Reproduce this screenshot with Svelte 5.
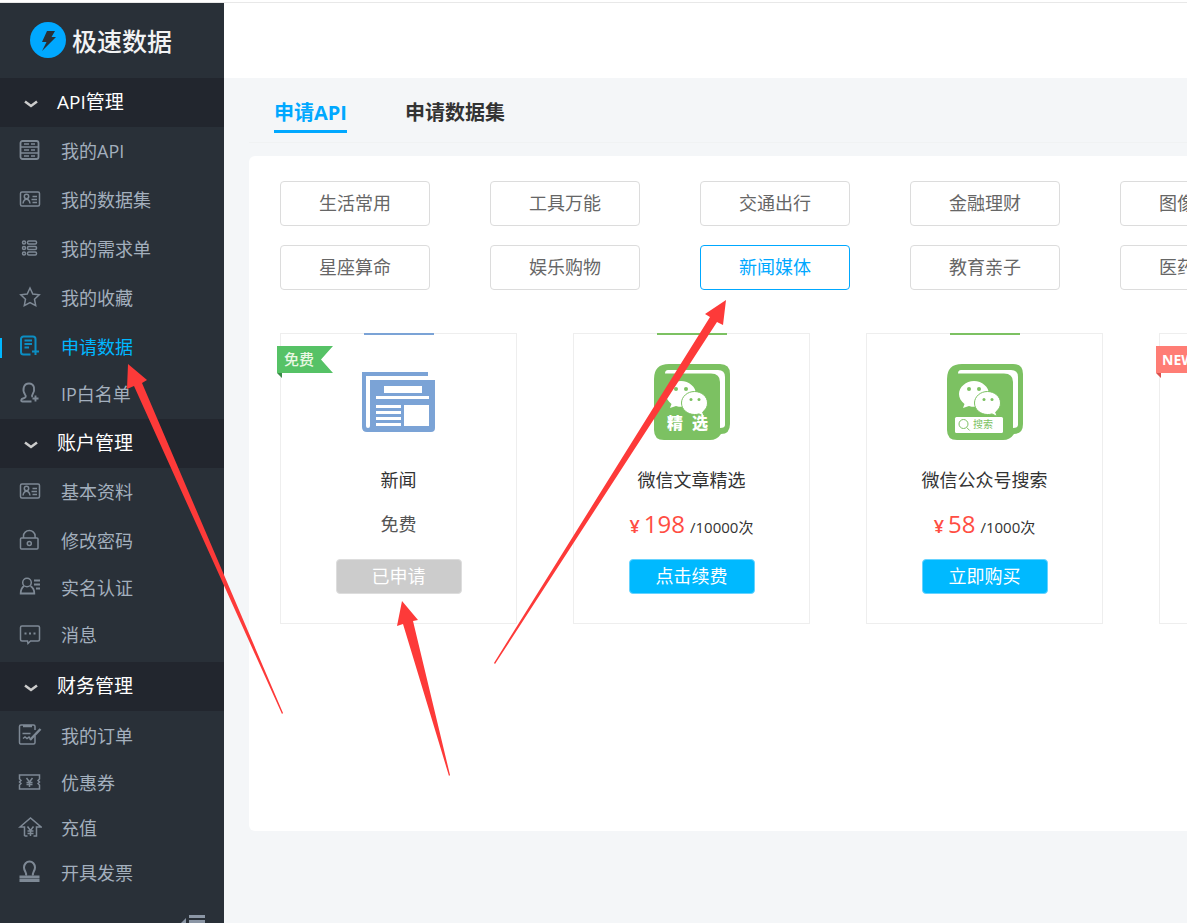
<script>
  const groups = [
    {
      title: 'API管理',
      items: [
        { icon: 'server', label: '我的API' },
        { icon: 'card', label: '我的数据集' },
        { icon: 'list', label: '我的需求单' },
        { icon: 'star', label: '我的收藏' },
        { icon: 'apply', label: '申请数据', active: true },
        { icon: 'userplus', label: 'IP白名单', compact: true }
      ]
    },
    {
      title: '账户管理',
      items: [
        { icon: 'card', label: '基本资料' },
        { icon: 'lock', label: '修改密码' },
        { icon: 'verify', label: '实名认证', compact: true },
        { icon: 'message', label: '消息' }
      ]
    },
    {
      title: '财务管理',
      spaced: true,
      items: [
        { icon: 'order', label: '我的订单' },
        { icon: 'coupon', label: '优惠券', compact: true },
        { icon: 'recharge', label: '充值', compact: true },
        { icon: 'invoice', label: '开具发票', compact: true }
      ]
    }
  ];

  const categories = [
    ['生活常用', '工具万能', '交通出行', '金融理财', '图像识别'],
    ['星座算命', '娱乐购物', '新闻媒体', '教育亲子', '医药健康']
  ];
  let current = $state('新闻媒体');

  const products = [
    { name: '新闻', icon: 'news', ribbon: '免费', free: true, action: '已申请', disabled: true },
    { name: '微信文章精选', icon: 'wechat', price: 198, unit: '/10000次', action: '点击续费' },
    { name: '微信公众号搜索', icon: 'search', price: 58, unit: '/1000次', action: '立即购买' }
  ];
</script>

{#snippet menuIcon(name)}
  <svg class="menu-icon" viewBox="0 0 24 24" width="24" height="24" aria-hidden="true">
    {#if name === 'server'}
      <rect x="2.500" y="3" width="18" height="18" rx="2" stroke-width="1.800" />
      <path d="M2.500 9h18M2.500 15h18M6 6h5M13 6h4M6 12h5M13 12h4M6 18h5M13 18h4" />
    {:else if name === 'card'}
      <rect x="2.500" y="5" width="19" height="14" rx="1.5" />
      <circle cx="8.500" cy="9.500" r="2.2" />
      <path d="M5 16.500c.5-3.300 2-4.300 3.500-4.300s3 1 3.500 4.300M14.500 9.500H19M13.500 12.500H19M14.500 15.500H19" />
    {:else if name === 'list'}
      <circle cx="6" cy="6.500" r="1.500" /><circle cx="6" cy="12" r="1.500" /><circle cx="6" cy="17.500" r="1.500" />
      <rect x="9.500" y="5" width="9" height="3" rx="1.200" /><rect x="9.500" y="10.500" width="9" height="3" rx="1.200" /><rect x="9.500" y="16" width="9" height="3" rx="1.200" />
    {:else if name === 'star'}
      <path d="M12 3l2.800 6 6.400.8-4.700 4.400 1.200 6.400L12 17.500l-5.700 3.100 1.200-6.400-4.700-4.400 6.400-.8z" />
    {:else if name === 'apply'}
      <path d="M12.500 20.500H5.500A2.500 2.500 0 0 1 3 18V5A2.500 2.500 0 0 1 5.500 2.500H15A2.500 2.500 0 0 1 17.500 5v9M6.500 6.500h7.500M6.500 10h7.500M6.500 13.500h4.500M17.500 14v7M14 17.500h7" stroke-width="2" />
    {:else if name === 'userplus'}
      <path d="M13.500 20.500H4.500c-2 0-1.500-2.500.5-3 3-.8 3.500-2 2-4C4 9 5.500 2.500 11 2.500S17.500 9 14.500 13.500c-.8 1.200-.7 2 0 2.600M17.500 14.500v6M14.500 17.500h6" stroke-width="1.900" />
    {:else if name === 'lock'}
      <rect x="2.500" y="10" width="17.500" height="11" rx="1" />
      <path d="M5.500 10V8a5.800 5.500 0 0 1 11.600 0v2" />
      <circle cx="11.300" cy="15.500" r="2" />
    {:else if name === 'verify'}
      <circle cx="9" cy="7.500" r="4.300" />
      <path d="M6 11c-2 1.500-3.300 4-3.300 7.500h13.600c0-3.500-1.300-6-3.800-7.500M16 5.500h6M16 9.500h6M18 13.500h4" stroke-width="1.800" />
    {:else if name === 'message'}
      <path d="M4 4h16a1.500 1.500 0 0 1 1.500 1.500v12a1.500 1.500 0 0 1-1.500 1.500H12.500l-2.500 2.500L9.500 19H4a1.500 1.500 0 0 1-1.500-1.500v-12A1.500 1.500 0 0 1 4 4z" />
      <path d="M6.500 11.500h2M11 11.500h2M15.500 11.500h2" stroke-width="2" />
    {:else if name === 'order'}
      <path d="M17 13v6.500a1.500 1.500 0 0 1-1.500 1.500h-13A1.500 1.500 0 0 1 1.500 19.500V3.500A1.500 1.500 0 0 1 3 2h12.500A1.500 1.500 0 0 1 17 3.500V7M5 3.500h9M5 15.500l2-1.500 2 1.500 2-1.500 1 1.500M4.500 10.500h8" />
      <path d="M22.500 6L12 17" stroke-width="2.500" />
    {:else if name === 'coupon'}
      <path d="M1.500 5h20v4l-1.500 1.500 1.500 1.500-1.500 1.500 1.500 1.500V19h-20v-4L3 13.500 1.500 12 3 10.500 1.500 9zM8.500 8l3 4 3-4M11.500 12v5M8.500 12.500h6M8.500 14.500h6" />
    {:else if name === 'recharge'}
      <path d="M6.500 21V12H2L12.500 3 23 12h-4.500v9h-3M6.500 21h3M9.500 11.500l3 4 3-4M12.500 15.500V21M9.500 16h6M9.500 18.500h6" />
    {:else if name === 'invoice'}
      <path d="M8.500 16.500c1-3-2-4.300-2-8a5 5.500 0 0 1 11 0c0 3.700-3 5-2 8" transform="translate(-.5 -1)" stroke-width="2" />
      <path d="M1.500 17h20M1.500 20.500h20" stroke-width="3" />
    {/if}
  </svg>
{/snippet}

{#snippet productIcon(name)}
  {#if name === 'news'}
    <svg viewBox="0 0 73 60" width="73" height="60" aria-hidden="true">
      <path fill="#7ba3d6" d="M0 0h66v4H4v50q0 2 2 2t2-2V8h65v48q0 4-4 4H5q-5 0-5-5z" />
      <path fill="#fff" d="M22 14h38v7H22zM14 24h53v3H14zM14 33h25v3H14zM14 39h25v3H14zM14 45h25v3H14zM14 51h25v3H14zM42 33h25v21H42z" />
    </svg>
  {:else}
    <svg viewBox="0 0 76 76" width="76" height="76" aria-hidden="true">
      <path fill="#7cc162" d="M15 0h51q10 0 10 10v50q0 10-9 10Q63 76 56 76H10Q0 76 0 66V15Q0 0 15 0z" />
      <path fill="#fff" d="M11 9.500q0-3.500 3-3.500h50q7 0 7 7v48q0 3-5 3V18q0-8.500-9-8.500z" />
      <path fill="#fff" d="M27 17c-8 0-15 6-15 13 0 4 2 7 5.500 10L16 44l6-2c9 3 20-2 20-12 0-7-7-13-15-13z" />
      <path fill="#fff" stroke="#7cc162" d="M40.500 27.500c-7 0-13 5-13 11.500s6 11.500 13 11.500c1.500 0 3 0 4.500-.6l5 2.600-1.300-4.500C52 45.500 53.500 42.500 53.500 39c0-6.500-6-11.500-13-11.500z" />
      <g fill="#7cc162">
        <circle cx="22" cy="25" r="2" /><circle cx="32" cy="25" r="2" />
        <circle cx="37" cy="35.500" r="1.500" /><circle cx="45" cy="35.500" r="1.500" />
      </g>
      {#if name === 'wechat'}
        <text class="badge-text" x="21" y="65" text-anchor="middle">精</text>
        <text class="badge-text" x="46" y="65" text-anchor="middle">选</text>
      {:else}
        <rect x="8" y="53" width="48" height="16" rx="1.500" fill="#fff" />
        <circle cx="16.500" cy="60" r="4.500" fill="none" stroke="#7cc162" />
        <path stroke="#7cc162" d="M19.700 63.500l3 3" />
        <text class="find-text" x="36" y="64" text-anchor="middle">搜索</text>
      {/if}
    </svg>
  {/if}
{/snippet}

{#snippet ribbon(text, kind)}
  <span class="ribbon {kind}">{text}</span>
{/snippet}

<div class="page">
  <aside class="sidebar">
    <a class="logo" href="#home">
      <svg viewBox="0 0 36 36" width="36" height="36" aria-hidden="true">
        <circle cx="18" cy="18" r="18" fill="#00a8ff" />
        <path fill="#293038" d="M17 9h8l-3.500 6H26L12 29l4.500-9H12z" />
      </svg>
      <span>极速数据</span>
    </a>
    <nav>
      {#each groups as group}
        <section>
          <h2>
            <svg viewBox="0 0 14 8" width="14" height="8" aria-hidden="true"><path d="M1 1.500L7 6l6-4.500" /></svg>
            {group.title}
          </h2>
          <ul class:spaced={group.spaced}>
            {#each group.items as item}
              <li>
                <a href="#{item.icon}" class:active={item.active} class:compact={item.compact}>
                  {@render menuIcon(item.icon)}
                  {item.label}
                </a>
              </li>
            {/each}
          </ul>
        </section>
      {/each}
    </nav>
    <button class="collapse" aria-label="收起">
      <svg viewBox="0 0 24 16" width="24" height="16" aria-hidden="true">
        <path d="M8 1.500h16M8 6.500h16M8 11.500h16" />
        <path class="solid" d="M5 3v10L0 8z" />
      </svg>
    </button>
  </aside>

  <div class="content">
    <header></header>
    <main>
      <div class="tabs">
        <a href="#api" class="active">申请API</a>
        <a href="#dataset">申请数据集</a>
      </div>

      <div class="panel">
        <div class="categories">
          {#each categories as row}
            <div class="row">
              {#each row as name}
                <button class:selected={current === name} onclick={() => (current = name)}>{name}</button>
              {/each}
            </div>
          {/each}
        </div>

        <div class="products">
          {#each products as item}
            <article class={item.icon}>
              {#if item.ribbon}{@render ribbon(item.ribbon, 'free')}{/if}
              <div class="picture">{@render productIcon(item.icon)}</div>
              <h3>{item.name}</h3>
              {#if item.free}
                <p>免费</p>
              {:else}
                <p><b>¥</b><strong>{item.price}</strong><small>{item.unit}</small></p>
              {/if}
              <button disabled={item.disabled}>{item.action}</button>
            </article>
          {/each}
          <article>{@render ribbon('NEW', 'new')}</article>
        </div>
      </div>
    </main>
  </div>

  <svg class="arrows" viewBox="0 0 1187 923" width="1187" height="923" aria-hidden="true">
    <path d="M128 364L147 380 142 383 283 713 282 714 134 386 127 389z" />
    <path d="M726 300L723 325 717 322 495 664 494 663 710 317 705 314z" />
    <path d="M402 601L418 620 413 621 450 775 449 776 403 624 397 626z" />
  </svg>
</div>

<style>
  :global(body) {
    margin: 0;
    font-family: 'Open Sans', 'Noto Sans CJK SC', sans-serif;
    font-size: 18px;
    background: #f4f6f8;
  }

  .page {
    position: relative;
    display: flex;
    box-sizing: border-box;
    height: 100vh;
    overflow: hidden;
    padding-top: 2px;
    background: #fff;
  }

  a {
    color: inherit;
    text-decoration: none;
  }

  h2, h3, p, ul {
    margin: 0;
    padding: 0;
    font-weight: 400;
    list-style: none;
  }

  button {
    font: inherit;
    padding: 0;
    cursor: pointer;
  }

  /* sidebar */
  .sidebar {
    flex: none;
    width: 224px;
    border-top: 1px solid #e8e8e8;
    background: #293038;
    color: #a3afbd;
  }

  .logo {
    display: flex;
    align-items: center;
    gap: 6px;
    box-sizing: border-box;
    height: 75px;
    padding: 0 0 1px 30px;
    color: #f2f3f4;
    font-size: 25px;
    font-weight: 500;
  }

  h2 {
    display: flex;
    align-items: center;
    gap: 19px;
    box-sizing: border-box;
    height: 49px;
    padding: 0 0 3px 24px;
    background: #22262e;
    color: #fff;
    font-size: 19px;
  }

  h2 svg {
    margin-top: 6px;
    fill: none;
    stroke: #ccc;
    stroke-width: 2.5;
  }

  ul {
    padding-bottom: 2px;
  }

  ul.spaced {
    padding-top: 1px;
  }

  li a {
    display: flex;
    align-items: center;
    gap: 19px;
    box-sizing: border-box;
    height: 49px;
    padding: 0 0 3px 18px;
    background: linear-gradient(#00b7ff, #00b7ff) no-repeat 0 50% / 0 20px;
  }

  li a.compact {
    height: 45px;
  }

  li a.active {
    color: #00b7ff;
    background-size: 2px 20px;
  }

  .menu-icon {
    fill: none;
    stroke: currentColor;
    stroke-width: 1.5;
    opacity: 0.7;
  }

  .collapse {
    display: block;
    margin: 17px 19px 0 auto;
    border: 0;
    background: none;
    line-height: 0;
  }

  .collapse path {
    stroke: #8b96a5;
    stroke-width: 3;
  }

  .collapse .solid {
    fill: #8b96a5;
    stroke: none;
  }

  /* content */
  .content {
    display: flex;
    flex: 1;
    flex-direction: column;
    min-width: 0;
    overflow: hidden;
    border-top: 1px solid #e8e8e8;
    background: #f4f6f8;
  }

  header {
    height: 75px;
    background: #fff;
  }

  .tabs {
    display: flex;
    gap: 58px;
    margin: 0 0 13px 25px;
    padding: 20px 25px 9px;
    border-bottom: 1px solid #f0f2f3;
    color: #333;
    font-size: 20px;
    font-weight: 700;
    line-height: 30px;
  }

  .tabs a {
    padding-bottom: 2px;
    border-bottom: 3px solid transparent;
  }

  .tabs .active {
    border-color: #00a8ff;
    color: #00a8ff;
  }

  .panel {
    box-sizing: border-box;
    min-height: 675px;
    margin-left: 25px;
    padding: 25px 0 25px 31px;
    border-radius: 6px 0 0 6px;
    background: #fff;
  }

  .categories {
    display: grid;
    gap: 19px;
  }

  .row {
    display: flex;
    gap: 60px;
  }

  .row button {
    flex: none;
    width: 150px;
    height: 45px;
    padding-bottom: 3px;
    border: 1px solid #dcdcdc;
    border-radius: 4px;
    background: #fff;
    color: #666;
  }

  .row .selected {
    border-color: #00a8ff;
    color: #00a8ff;
  }

  .products {
    display: flex;
    gap: 56px;
    margin-top: 43px;
  }

  article {
    position: relative;
    display: flex;
    flex: none;
    flex-direction: column;
    align-items: center;
    box-sizing: border-box;
    width: 237px;
    padding: 30px 0 29px;
    border: 1px solid #eee;
    color: #333;
    line-height: 24px;
  }

  article::before {
    content: '';
    position: absolute;
    top: -1px;
    width: 70px;
    height: 2px;
    background: #7cc162;
  }

  .news::before {
    background: #7ba3d6;
  }

  .picture {
    display: grid;
    place-items: center;
    height: 76px;
  }

  .badge-text {
    fill: #fff;
    font-size: 16px;
    font-weight: 900;
  }

  .find-text {
    fill: #7cc162;
    font-size: 10px;
  }

  h3 {
    margin-top: 28px;
    font-size: 18px;
  }

  p {
    height: 24px;
    margin-top: 20px;
    color: #555;
  }

  p b,
  p strong {
    color: #ff4d43;
  }

  p b {
    margin-right: 4px;
    font-weight: 600;
  }

  p strong {
    margin-right: 5px;
    font-size: 24px;
    font-weight: 400;
  }

  p small {
    color: #333;
    font-size: 15px;
  }

  article button {
    width: 126px;
    height: 35px;
    margin-top: 23px;
    padding-bottom: 1px;
    border: 1px solid #66d3ff;
    border-radius: 4px;
    background: #00b9ff;
    color: #fff;
  }

  article button:disabled {
    border-color: #ddd;
    background: #ccc;
    cursor: default;
  }

  .ribbon {
    position: absolute;
    top: 12px;
    left: -4px;
    box-sizing: border-box;
    width: 56px;
    height: 27px;
    padding-left: 7px;
    background: #56c266;
    clip-path: polygon(0 0, 100% 0, 44px 50%, 100% 100%, 5px 100%, 5px 32px, 0 27px);
    color: #eaf8e4;
    font-size: 15px;
    font-weight: 500;
    line-height: 27px;
  }

  .ribbon::after {
    content: '';
    position: absolute;
    top: 27px;
    left: 0;
    width: 5px;
    height: 5px;
    background: #3b8a48;
  }

  .ribbon.new {
    padding-left: 6px;
    background: #ff7d75;
    color: #fff;
    font-size: 14px;
    font-weight: 700;
  }

  .ribbon.new::after {
    background: #d9534f;
  }

  .arrows {
    position: absolute;
    top: 0;
    left: 0;
    fill: #fd3a39;
    pointer-events: none;
  }
</style>
